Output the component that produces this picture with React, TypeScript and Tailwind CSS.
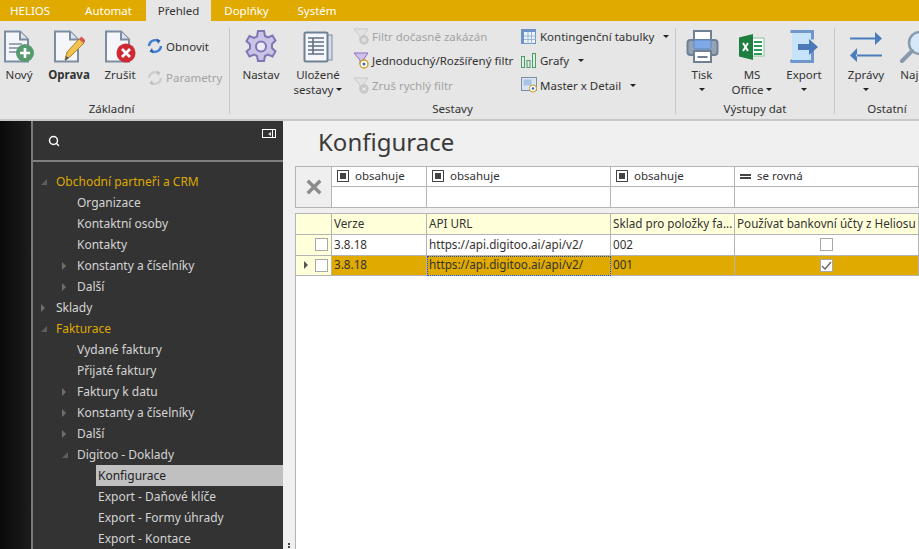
import type { ReactNode } from "react";
import { Search } from "lucide-react";

const font = "font-['Noto_Sans','Open_Sans',sans-serif]";

function Caret({ className = "" }: { className?: string }) {
  return <span className={clsx2("inline-block w-0 h-0 border-x-[3px] border-x-transparent border-t-[3px] border-t-[#222]", className)} />;
}

function clsx2(...c: string[]) {
  return c.filter(Boolean).join(" ");
}

function Page({ children }: { children?: ReactNode }) {
  return (
    <svg width="32" height="33" viewBox="0 0 32 33">
      <path d="M2 1.500h15l8 8v22H2z" fill="#f4f6f9" stroke="#7d8da1" strokeWidth="2" />
      <path d="M17 1.500v8h8" fill="#dfe5ec" stroke="#7d8da1" strokeWidth="2" />
      {children}
    </svg>
  );
}

const NewIcon = () => (
  <Page>
    <path d="M6 14h13M6 18h11M6 22h9" stroke="#7d8da1" strokeWidth="1.600" />
    <circle cx="22" cy="23" r="9" fill="#569b6e" />
    <path d="M22 18v10M17 23h10" stroke="#fff" strokeWidth="2.600" />
  </Page>
);
const EditIcon = () => (
  <Page>
    <path d="M12 30l2-8L26 9l5 4-13 13z" fill="#f2c14e" stroke="#a98532" strokeWidth="1" />
    <path d="M26 9l2.500-2.500 4 4L31 13z" fill="#d9534f" />
    <path d="M12 31l1-5 3 2z" fill="#555" />
  </Page>
);
const CancelIcon = () => (
  <Page>
    <circle cx="22" cy="23" r="9.500" fill="#cf2a33" />
    <path d="M18 19l8 8M26 19l-8 8" stroke="#fff" strokeWidth="2.800" />
  </Page>
);
function RefreshIcon({ off }: { off?: boolean }) {
  const a = off ? "#cfcfcf" : "#3f7fd0";
  const b = off ? "#bdbdbd" : "#2c5fa8";
  return (
    <svg width="16" height="16" viewBox="0 0 16 16" fill="none">
      <path d="M2 8a6 6 0 0 1 9-5" stroke={a} strokeWidth="2.400" />
      <path d="M9.500 0.500l4 2-2.500 3.500z" fill={b} />
      <path d="M14 8a6 6 0 0 1-9 5" stroke={a} strokeWidth="2.400" />
      <path d="M6.500 15.500l-4-2 2.500-3.500z" fill={b} />
    </svg>
  );
}
const GearIcon = () => (
  <svg width="32" height="33" viewBox="0 0 32 33">
    <path
      d="M13 1h6l1 5 3 1.500 4.500-2 3 5-3.500 3.500v4l3.500 3.500-3 5-4.500-2-3 1.500-1 5h-6l-1-5-3-1.500-4.500 2-3-5L5 18.500v-4L1.500 11l3-5L9 8l3-1.500z"
      fill="#c9c4e6"
      stroke="#8076b5"
      strokeWidth="2"
    />
    <circle cx="16" cy="16.500" r="5" fill="#eceaf5" stroke="#8076b5" strokeWidth="2" />
  </svg>
);
const ReportsIcon = () => (
  <svg width="30" height="32" viewBox="0 0 30 32">
    <rect x="20" y="4" width="9" height="25" fill="#d6dde6" stroke="#7d8da1" />
    <rect x="1.500" y="1.500" width="23" height="29" rx="1.500" fill="#f4f6f9" stroke="#6f8095" strokeWidth="2" />
    <path d="M5 7h16M5 11h16M5 15h16M5 19h16M5 23h16M10 7v16" stroke="#5f7085" strokeWidth="1.600" />
  </svg>
);
function Funnel({ off, badge }: { off?: boolean; badge?: string }) {
  const stroke = off ? "#c9c9c9" : "#8a6fc0";
  return (
    <svg width="17" height="17" viewBox="0 0 17 17">
      <path d="M1 1h14L10 8v5l-3-1V8z" fill={off ? "#e2e2e2" : "#cfc3ea"} stroke={stroke} />
      <circle cx="11" cy="12" r="4" fill={off ? "#cccccc" : "#fff"} stroke={off ? "#c4c4c4" : "#c99a1e"} strokeWidth="1.300" />
      {badge === "eye" && <circle cx="11" cy="12" r="1.500" fill="#3c6ca8" />}
      {badge === "pause" && <path d="M10 10v4M12 10v4" stroke="#eee" />}
      {badge === "x" && <path d="M9.500 10.500l3 3M12.500 10.500l-3 3" stroke="#eee" />}
    </svg>
  );
}
const PivotIcon = () => (
  <svg width="15" height="15" viewBox="0 0 15 15">
    <rect x="0.500" y="0.500" width="14" height="14" fill="#eef3fa" stroke="#6d94c4" />
    <path d="M0 1.500h15" stroke="#6d94c4" strokeWidth="3" />
    <path d="M1.500 0v15" stroke="#6d94c4" strokeWidth="3" />
    <path d="M7 3v12M10.500 3v12M3 7h12M3 10.500h12" stroke="#9bb8da" />
  </svg>
);
const ChartIcon = () => (
  <svg width="15" height="15" viewBox="0 0 15 15" fill="#dcefe2" stroke="#4f9a68">
    <rect x="0.500" y="3.500" width="3" height="11" />
    <rect x="6" y="7.500" width="3" height="7" />
    <rect x="11.500" y="0.500" width="3" height="14" />
  </svg>
);
const MasterIcon = () => (
  <svg width="17" height="16" viewBox="0 0 17 16">
    <rect x="0.500" y="0.500" width="15" height="13" fill="#d9e4f3" stroke="#7d8da1" />
    <rect x="2.500" y="2.500" width="8" height="6" fill="#a9c3e4" />
    <circle cx="12" cy="11.500" r="3.500" fill="#fff" stroke="#c99a1e" />
    <circle cx="12" cy="11.500" r="1.300" fill="#3c6ca8" />
  </svg>
);
const PrinterIcon = () => (
  <svg width="33" height="33" viewBox="0 0 33 33">
    <rect x="8" y="1" width="17" height="12" fill="#fff" stroke="#6f8095" strokeWidth="2" />
    <rect x="1.500" y="10" width="30" height="15" rx="3" fill="#93a3b5" stroke="#6f8095" strokeWidth="2" />
    <path d="M8 10h17v7q0 2-2 2H10q-2 0-2-2z" fill="#7fa9e6" stroke="#5f86c2" />
    <rect x="8" y="21" width="17" height="11" fill="#fff" stroke="#6f8095" strokeWidth="2" />
    <path d="M11.500 27h10" stroke="#6f8095" strokeWidth="2" />
  </svg>
);
const ExcelIcon = () => (
  <svg width="26" height="26" viewBox="0 0 26 26">
    <rect x="11" y="4" width="14" height="18" fill="#fff" stroke="#86c49c" />
    <path d="M15 8h8M15 12h8M15 16h8M15 20h8" stroke="#2f9a5b" strokeWidth="2" />
    <path d="M0 3.500L14 0v26L0 22.500z" fill="#1e7e40" />
    <path d="M4 9l5 8M9 9l-5 8" stroke="#fff" strokeWidth="2" />
  </svg>
);
const ExportIcon = () => (
  <svg width="30" height="33" viewBox="0 0 30 33">
    <path d="M1.500 1.500h22v8M23.500 23v8.500h-22z" fill="#c7e3fa" stroke="#6f97cc" strokeWidth="3" />
    <rect x="3" y="3" width="19" height="27" fill="#c7e3fa" />
    <path d="M9 14h11V9l9 8-9 8v-5H9z" fill="#4a78b8" />
  </svg>
);
const ArrowsIcon = () => (
  <svg width="34" height="31" viewBox="0 0 34 31" fill="#4a7dbd">
    <path d="M1 6.500h26v2H1zM26 1l7 6.500-7 6.500z" />
    <path d="M7 23.500h26v2H7zM8 17l-7 7.500 7 6.500z" />
  </svg>
);
const LensIcon = () => (
  <svg width="28" height="33" viewBox="0 0 28 33" className="shrink-0">
    <circle cx="21" cy="13" r="11" fill="#d4e8fa" stroke="#8a9aad" strokeWidth="2.500" />
    <path d="M13 21L3 31" stroke="#8a9aad" strokeWidth="4" strokeLinecap="round" />
  </svg>
);

function LargeButton(props: { icon: ReactNode; lines: ReactNode[]; w: string; bold?: boolean }) {
  return (
    <div className={clsx2("flex flex-col items-center shrink-0", props.w)}>
      <div className="h-[33px] flex items-center justify-center">{props.icon}</div>
      <div className={clsx2("mt-[4px] flex flex-col items-center text-[11.5px] leading-[15px] whitespace-nowrap", props.bold ? "font-bold" : "")}>
        {props.lines.map((l, i) => (
          <div key={i} className="h-[15px] flex items-center gap-[3px]">
            {l}
          </div>
        ))}
      </div>
    </div>
  );
}

function SmallButton(props: { icon: ReactNode; label: string; off?: boolean; caret?: string }) {
  return (
    <div className={clsx2("h-[24.5px] flex items-center whitespace-nowrap text-[11.5px]", props.off ? "text-[#a3a3a3]" : "text-[#333]")}>
      <span className="w-[19px] shrink-0 flex justify-start">{props.icon}</span>
      {props.label}
      {props.caret && <Caret className={props.caret} />}
    </div>
  );
}

function Group(props: { w: string; label: string; labelPad?: string; border?: boolean; children: ReactNode }) {
  return (
    <div className={clsx2("shrink-0 flex flex-col", props.w, props.border === false ? "" : "border-r border-[#c8c8c8]")}>
      <div className="flex-1 flex items-start pt-[2px]">{props.children}</div>
      <div className={clsx2("h-[12px] mb-[-1px] leading-[12px] text-[11.5px] text-center text-[#333]", props.labelPad ?? "")}>{props.label}</div>
    </div>
  );
}

function Ribbon() {
  return (
    <div className="h-[100px] bg-[#e6e6e6] border-b-2 border-[#c8c8c8] pt-[7px] pb-[5px] flex overflow-hidden text-[#333]">
      <Group w="w-[230px]" label="Základní" labelPad="pr-[6px]">
        <LargeButton w="w-[38px] ml-[0px]" icon={<NewIcon />} lines={["Nový"]} />
        <LargeButton w="w-[50px] ml-[6px]" bold icon={<EditIcon />} lines={["Oprava"]} />
        <LargeButton w="w-[50px] ml-[1px]" icon={<CancelIcon />} lines={["Zrušit"]} />
        <div className="ml-[2px] flex flex-col pt-[4px] gap-[7px]">
          <SmallButton icon={<RefreshIcon />} label="Obnovit" />
          <SmallButton off icon={<RefreshIcon off />} label="Parametry" />
        </div>
      </Group>
      <Group w="w-[446px]" label="Sestavy">
        <LargeButton w="w-[46px] ml-[8px]" icon={<GearIcon />} lines={["Nastav"]} />
        <LargeButton w="w-[52px] ml-[8px]" icon={<ReportsIcon />} lines={["Uložené", <>sestavy <Caret /></>]} />
        <div className="ml-[9px] w-[168px] flex flex-col shrink-0 -mt-[6px]">
          <SmallButton off icon={<Funnel off badge="pause" />} label="Filtr dočasně zakázán" />
          <SmallButton icon={<Funnel badge="eye" />} label="Jednoduchý/Rozšířený filtr" />
          <SmallButton off icon={<Funnel off badge="x" />} label="Zruš rychlý filtr" />
        </div>
        <div className="flex flex-col -mt-[6px]">
          <SmallButton icon={<PivotIcon />} label="Kontingenční tabulky" caret="ml-[9px]" />
          <SmallButton icon={<ChartIcon />} label="Grafy" caret="ml-[9px]" />
          <SmallButton icon={<MasterIcon />} label="Master x Detail" caret="ml-[9px]" />
        </div>
      </Group>
      <Group w="w-[159px]" label="Výstupy dat">
        <LargeButton w="w-[44px] ml-[4px]" icon={<PrinterIcon />} lines={["Tisk", <Caret />]} />
        <LargeButton w="w-[52px] ml-[2px]" icon={<ExcelIcon />} lines={["MS", <>Office <Caret /></>]} />
        <LargeButton w="w-[48px] ml-[2px]" icon={<ExportIcon />} lines={["Export", <Caret />]} />
      </Group>
      <Group w="w-[100px]" label="Ostatní" labelPad="pl-[4px]" border={false}>
        <LargeButton w="w-[48px] ml-[7px]" icon={<ArrowsIcon />} lines={["Zprávy", <Caret />]} />
        <LargeButton w="w-[36px] ml-[5px]" icon={<LensIcon />} lines={["Najít"]} />
      </Group>
    </div>
  );
}

function Tabs() {
  const tabs = ["Automat", "Přehled", "Doplňky", "Systém"];
  return (
    <div className="h-[21px] bg-[#e0aa00] flex items-stretch text-[11.5px] text-white">
      <div className="w-[71px] pl-[10px] flex items-center">HELIOS</div>
      {tabs.map((t) => (
        <div
          key={t}
          className={clsx2(
            "flex items-center justify-center",
            t === "Přehled" ? "w-[65px] bg-[#e6e6e6] text-[#333]" : t === "Automat" ? "w-[75px]" : t === "Doplňky" ? "w-[71px]" : "w-[70px]",
          )}
        >
          {t}
        </div>
      ))}
    </div>
  );
}

type Node = { label: string; level: 0 | 1 | 2; arrow?: "open" | "closed"; active?: boolean; selected?: boolean };

const tree: Node[] = [
  { label: "Obchodní partneři a CRM", level: 0, arrow: "open", active: true },
  { label: "Organizace", level: 1 },
  { label: "Kontaktní osoby", level: 1 },
  { label: "Kontakty", level: 1 },
  { label: "Konstanty a číselníky", level: 1, arrow: "closed" },
  { label: "Další", level: 1, arrow: "closed" },
  { label: "Sklady", level: 0, arrow: "closed" },
  { label: "Fakturace", level: 0, arrow: "open", active: true },
  { label: "Vydané faktury", level: 1 },
  { label: "Přijaté faktury", level: 1 },
  { label: "Faktury k datu", level: 1, arrow: "closed" },
  { label: "Konstanty a číselníky", level: 1, arrow: "closed" },
  { label: "Další", level: 1, arrow: "closed" },
  { label: "Digitoo - Doklady", level: 1, arrow: "open" },
  { label: "Konfigurace", level: 2, selected: true },
  { label: "Export - Daňové klíče", level: 2 },
  { label: "Export - Formy úhrady", level: 2 },
  { label: "Export - Kontace", level: 2 },
];

function TreeRow({ node }: { node: Node }) {
  const pad = node.level === 0 ? "pl-[8px]" : node.level === 1 ? "pl-[29px]" : "pl-[50px]";
  return (
    <div className={clsx2("h-[21px] flex items-center whitespace-nowrap text-xs", pad)}>
      <span className="w-[15px] shrink-0 flex items-center">
        {node.arrow === "closed" && <span className="w-0 h-0 border-y-[4px] border-y-transparent border-l-[4px] border-l-[#6e6e6e]" />}
        {node.arrow === "open" && <span className="w-0 h-0 border-b-[6px] border-b-[#5e5e5e] border-l-[6px] border-l-transparent" />}
      </span>
      <span
        className={clsx2(
          "flex-1 h-full flex items-center",
          node.selected ? "bg-[#c0c0c0] text-[#222] -ml-[2px] pl-[2px]" : node.active ? "text-[#dfa800]" : "text-[#d4d4d4]",
        )}
      >
        {node.label}
      </span>
    </div>
  );
}

function Sidebar() {
  return (
    <div className="w-[283px] shrink-0 flex bg-[#111]">
      <div className="w-[31px] shrink-0 bg-gradient-to-r from-[#0a0a0a] to-[#1c1c1c]" />
      <div className="w-[252px] border-l-2 border-[#7a7a7a] bg-[#333] flex flex-col overflow-hidden">
        <div className="h-[41px] shrink-0 border-b-2 border-[#7f7f7f] px-[15px] flex justify-between">
          <Search size={12} strokeWidth={3} className="text-white mt-[14px]" />
          <span className="-mr-[8px] mt-[8px] w-[14px] h-[9px] border border-white flex items-center justify-end pr-[2px] gap-[1px]">
            <span className="w-0 h-0 border-y-[2px] border-y-transparent border-r-[3px] border-r-[#ddd]" />
            <span className="w-[1px] h-full bg-white" />
          </span>
        </div>
        <div className="pt-[9px]">
          {tree.map((n, i) => (
            <TreeRow key={i} node={n} />
          ))}
        </div>
      </div>
    </div>
  );
}

const cols = "grid grid-cols-[36px_95px_184px_124px_1fr]";
const cell = "border-r border-b border-[#b4b4b4] flex items-center overflow-hidden whitespace-nowrap";

function FilterOp({ label, eq }: { label: string; eq?: boolean }) {
  return (
    <div className={clsx2(cell, "h-[20px] bg-white pl-[5px] gap-[6px] text-[11.5px] pb-[1px]")}>
      {eq ? (
        <span className="w-[11px] h-[5px] border-y-2 border-[#444]" />
      ) : (
        <span className="w-[12px] h-[12px] border border-[#444] flex items-center justify-center">
          <span className="w-[6px] h-[6px] bg-[#444]" />
        </span>
      )}
      {label}
    </div>
  );
}

function FilterTable() {
  return (
    <div className={clsx2(cols, "border-t border-l border-[#b4b4b4] text-[#333]")}>
      <div className={clsx2(cell, "row-span-2 bg-[#efefef] justify-center")}>
        <svg width="16" height="16" viewBox="0 0 14 14">
          <path d="M1.500 1.500l11 11M12.500 1.500l-11 11" stroke="#8c8c8c" strokeWidth="3" />
        </svg>
      </div>
      <FilterOp label="obsahuje" />
      <FilterOp label="obsahuje" />
      <FilterOp label="obsahuje" />
      <FilterOp label="se rovná" eq />
      <div className={clsx2(cell, "h-[21px] bg-white")} />
      <div className={clsx2(cell, "h-[21px] bg-white")} />
      <div className={clsx2(cell, "h-[21px] bg-white")} />
      <div className={clsx2(cell, "h-[21px] bg-white")} />
    </div>
  );
}

function Check({ on }: { on?: boolean }) {
  return (
    <span className="w-[13px] h-[13px] border border-[#a8a8a8] bg-white flex items-center justify-center">
      {on && (
        <svg width="11" height="9" viewBox="0 0 11 9" fill="none">
          <path d="M1 5l3 3 6-7" stroke="#666" strokeWidth="1.400" />
        </svg>
      )}
    </span>
  );
}

function GridRow(props: { selected?: boolean; sklad: string }) {
  const bg = props.selected ? "bg-[#e0aa00]" : "bg-white";
  const txt = clsx2(cell, "h-[20.5px] px-[2px] text-[11.7px]", bg);
  return (
    <>
      <div className={clsx2(cell, "h-[20.5px] bg-[#ffffd9] pl-[8px] pr-[3px] justify-between")}>
        <span className={props.selected ? "w-0 h-0 border-y-[4px] border-y-transparent border-l-[4px] border-l-[#555]" : ""} />
        <Check />
      </div>
      <div className={txt}>3.8.18</div>
      <div className={clsx2(txt, props.selected ? "outline-1 -outline-offset-1 outline-dotted outline-[#2b4fa8]" : "")}>https://api.digitoo.ai/api/v2/</div>
      <div className={txt}>{props.sklad}</div>
      <div className={clsx2(cell, "h-[20.5px] justify-center", bg)}>
        <Check on={props.selected} />
      </div>
    </>
  );
}

function Content() {
  return (
    <div className="flex-1 min-w-0 bg-[#f0f0f0] flex">
      <div className="w-[12px] shrink-0 flex flex-col justify-end items-center pb-[1px] gap-[1px]">
        <span className="w-[2px] h-[2px] bg-[#444]" />
        <span className="w-[2px] h-[2px] bg-[#444]" />
      </div>
      <div className="flex-1 min-w-0 flex flex-col">
        <div className="h-[45px] pl-[23px] pt-[4px] text-2xl leading-[33px] text-[#3a3a3a]">Konfigurace</div>
        <FilterTable />
        <div className="h-[5px]" />
        <div className="flex-1 bg-white border-l border-[#b4b4b4] text-[#333]">
          <div className={clsx2(cols, "border-t border-[#b4b4b4] -ml-[1px] border-l")}>
            <div className={clsx2(cell, "h-[21px] bg-[#ffffd9]")} />
            {["Verze", "API URL", "Sklad pro položky fa...", "Používat bankovní účty z Heliosu"].map((h) => (
              <div key={h} className={clsx2(cell, "h-[21px] bg-[#ffffd9] px-[2px] text-[11.7px]")}>
                {h}
              </div>
            ))}
            <GridRow sklad="002" />
            <GridRow selected sklad="001" />
          </div>
        </div>
      </div>
    </div>
  );
}

export default function App() {
  return (
    <div className={clsx2("w-[919px] h-[549px] flex flex-col overflow-hidden", font)}>
      <Tabs />
      <Ribbon />
      <div className="flex-1 min-h-0 flex">
        <Sidebar />
        <Content />
      </div>
    </div>
  );
}
